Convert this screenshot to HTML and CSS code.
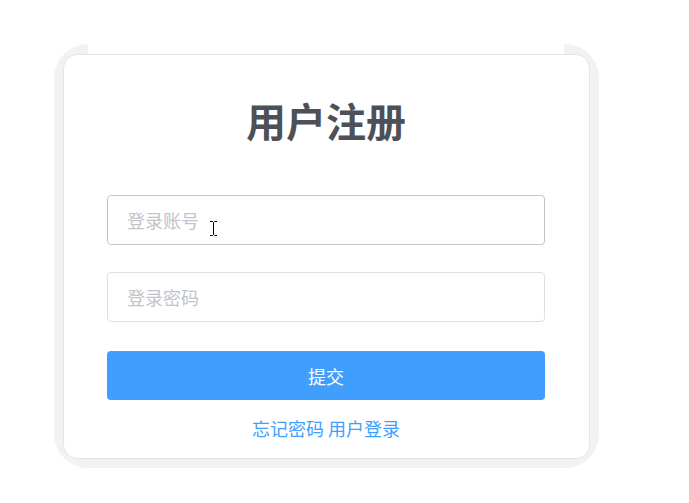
FILE: index.html
```html
<!DOCTYPE html>
<html lang="zh">
<head>
<meta charset="utf-8">
<title>用户注册</title>
<link rel="stylesheet" href="styles.css">
</head>
<body>
<div class="page">
  <div class="frame">
    <div class="card">
      <h1 class="title">用户注册</h1>
      <form class="form">
        <div class="field">
          <input class="input input-hover" type="text" placeholder="登录账号">
          <svg class="cursor" width="9" height="17" viewBox="0 0 9 17"><path d="M1 1.5h2.5l1 1 1-1H8M4.5 2.5v12M1 15.5h2.5l1-1 1 1H8" fill="none" stroke="#fff" stroke-width="2.2"/><path d="M1 1.5h2.5l1 1 1-1H8M4.5 2.5v12M1 15.5h2.5l1-1 1 1H8" fill="none" stroke="#000" stroke-width="1"/></svg>
        </div>
        <div class="field">
          <input class="input" type="password" placeholder="登录密码">
        </div>
        <button class="submit" type="button">提交</button>
        <div class="links"><a href="#">忘记密码</a> <a href="#">用户登录</a></div>
      </form>
    </div>
  </div>
</div>
</body>
</html>
```
FILE: styles.css
```css
html, body {
  margin: 0;
  padding: 0;
  background: #ffffff;
  font-family: "Noto Sans CJK SC", "Noto Sans", sans-serif;
}
.page {
  padding: 44px 0 0 54px;
}
.frame {
  position: relative;
  width: 545px;
  box-sizing: border-box;
  padding: 10px 9px 9px 9px;
  background: #f2f2f2;
  border-radius: 34px;
}
.frame::before {
  content: "";
  position: absolute;
  top: 0;
  left: 34px;
  right: 35px;
  height: 10px;
  background: #ffffff;
}
.card {
  position: relative;
  background: #ffffff;
  border: 1px solid #e4e4e4;
  border-radius: 14px;
  padding: 45px 44px 18px 43px;
}
.title {
  margin: 0;
  text-align: center;
  font-size: 40px;
  line-height: 40px;
  font-weight: 700;
  color: #4e5057;
}
.form {
  margin-top: 55px;
  display: flex;
  flex-direction: column;
}
.field {
  position: relative;
}
.field + .field {
  margin-top: 27px;
}
.input {
  display: block;
  width: 100%;
  box-sizing: border-box;
  height: 50px;
  border: 1px solid #dcdfe6;
  border-radius: 4px;
  padding: 0 19px;
  font-family: inherit;
  font-size: 18px;
  color: #606266;
  outline: none;
  background: #fff;
}
.input-hover {
  border-color: #c0c4cc;
}
.input::placeholder {
  color: #c0c4cc;
}
.cursor {
  position: absolute;
  left: 102px;
  top: 25px;
}
.submit {
  margin-top: 29px;
  height: 49px;
  border: none;
  border-radius: 4px;
  background: #409eff;
  color: #ffffff;
  font-family: inherit;
  font-size: 18px;
}
.links {
  margin-top: 16px;
  text-align: center;
  font-size: 18px;
  line-height: 24px;
}
.links a {
  color: #409eff;
  text-decoration: none;
}
```
